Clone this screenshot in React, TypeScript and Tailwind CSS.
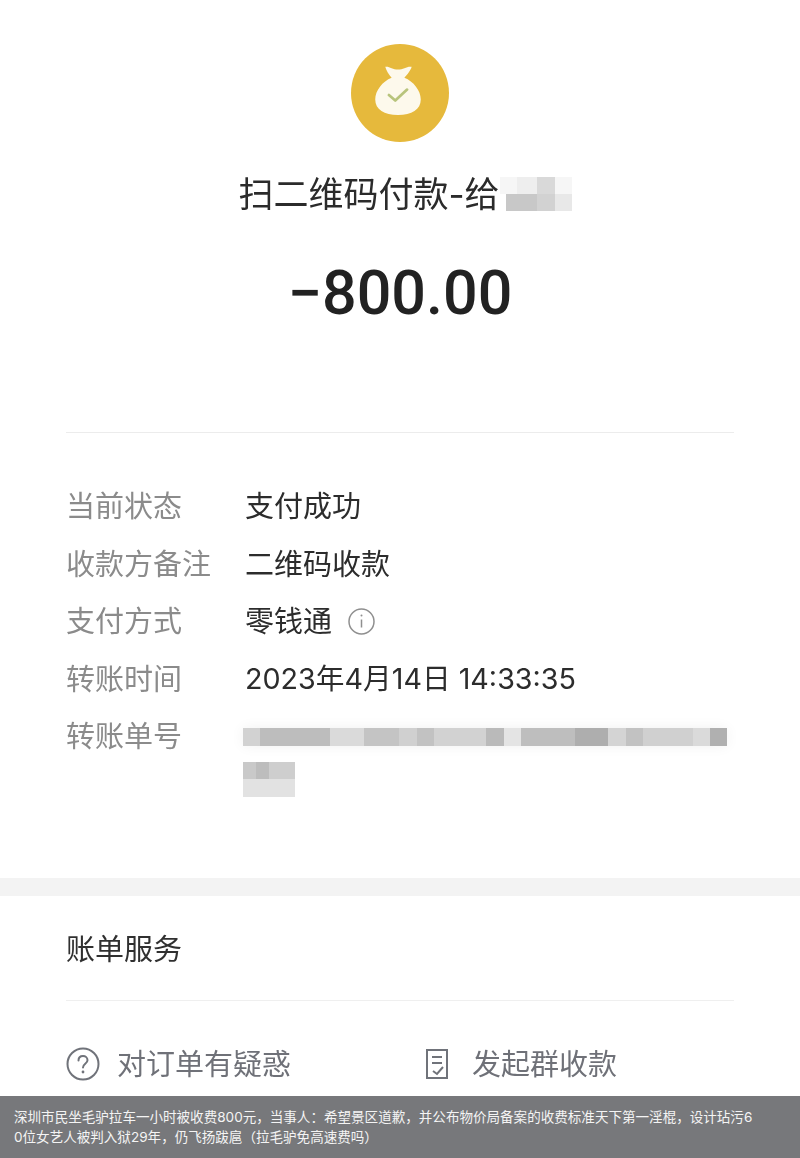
import type { ReactNode } from 'react';

const font = "font-['Inter','Noto_Sans_CJK_SC',sans-serif]";

const mosaicRow = [
  { w: 'w-[17px]', bg: 'bg-[#d2d2d2]' },
  { w: 'w-[70px]', bg: 'bg-[#bdbdbd]' },
  { w: 'w-[34px]', bg: 'bg-[#dadada]' },
  { w: 'w-[35px]', bg: 'bg-[#c4c4c4]' },
  { w: 'w-[18px]', bg: 'bg-[#d0d0d0]' },
  { w: 'w-[17px]', bg: 'bg-[#c2c2c2]' },
  { w: 'w-[52px]', bg: 'bg-[#d2d2d2]' },
  { w: 'w-[18px]', bg: 'bg-[#bababa]' },
  { w: 'w-[17px]', bg: 'bg-[#e4e4e4]' },
  { w: 'w-[54px]', bg: 'bg-[#bebebe]' },
  { w: 'w-[33px]', bg: 'bg-[#aeaeae]' },
  { w: 'w-[18px]', bg: 'bg-[#d4d4d4]' },
  { w: 'w-[17px]', bg: 'bg-[#c2c2c2]' },
  { w: 'w-[50px]', bg: 'bg-[#d0d0d0]' },
  { w: 'w-[17px]', bg: 'bg-[#dadada]' },
  { w: 'w-[17px]', bg: 'bg-[#b0b0b0]' },
];

function Row({ label, children }: { label: string; children: ReactNode }) {
  return (
    <div className="flex h-[57.5px] items-center">
      <div className="w-[179px] shrink-0 text-[29px] leading-none text-[#8b8b8b]">{label}</div>
      <div className="flex items-center text-[29px] leading-none text-[#2c2c2c]">{children}</div>
    </div>
  );
}

function MoneyBag() {
  return (
    <div className="flex h-[98px] w-[98px] items-center justify-center rounded-full bg-[#e6b93c] pr-[4px] pb-[5px]">
      <svg width="46" height="51" viewBox="0 0 50 56" fill="none">
        <path
          d="M11 2c4-1 8 3 14 3s10-4 15-3c-1 4-5 9-8 12 10 4 18 14 18 24 0 11-10 17-25 17S0 49 0 38c0-10 8-20 18-24-3-3-6-8-7-12z"
          fill="#fdf9ec"
        />
        <path d="M15 33l7 6 13-12" stroke="#b8c47c" strokeWidth="3" strokeLinecap="round" strokeLinejoin="round" />
      </svg>
    </div>
  );
}

export default function App() {
  return (
    <div className={`relative h-[1158px] w-[800px] overflow-hidden bg-white ${font}`}>
      <div className="blur-[0.5px]">
        <div className="flex h-[878px] flex-col px-[66px]">
          <div className="flex flex-col items-center pt-[44px]">
            <MoneyBag />
            <div className="mt-[33px] flex h-[38px] items-center pl-[10px]">
              <span className="text-[35px] leading-none text-[#2b2b2b]">扫二维码付款-给</span>
              <div className="flex flex-col">
                <div className="flex">
                  <div className="h-[17px] w-[17px] bg-[#f6f6f6]" />
                  <div className="h-[17px] w-[20px] bg-[#eeeeee]" />
                  <div className="h-[17px] w-[18px] bg-[#d9d9d9]" />
                  <div className="h-[17px] w-[17px] bg-[#f6f6f6]" />
                </div>
                <div className="flex">
                  <div className="h-[17px] w-[6px] bg-[#ffffff]" />
                  <div className="h-[17px] w-[31px] bg-[#c8c8c8]" />
                  <div className="h-[17px] w-[18px] bg-[#d2d2d2]" />
                  <div className="h-[17px] w-[17px] bg-[#e8e8e8]" />
                </div>
              </div>
            </div>
            <div className="mt-[44px] font-['Roboto','Noto_Sans_CJK_SC',sans-serif] text-[61px] font-medium leading-[72px] text-[#222222]">
              −800.00
            </div>
          </div>
          <div className="mt-[103px] h-px bg-[#ececec]" />
          <div className="mt-[45px] flex flex-col">
            <Row label="当前状态">支付成功</Row>
            <Row label="收款方备注">二维码收款</Row>
            <Row label="支付方式">
              零钱通
              <svg className="ml-[15px]" width="29" height="29" viewBox="0 0 29 29" fill="none">
                <circle cx="14.5" cy="14.5" r="12.5" stroke="#8f8f8f" strokeWidth="1.5" />
                <path d="M14.5 12.5v8" stroke="#8f8f8f" strokeWidth="1.5" />
                <circle cx="14.5" cy="8.5" r="1" fill="#8f8f8f" />
              </svg>
            </Row>
            <Row label="转账时间">
              <span className="text-[28.7px]">2023年4月14日 14:33:35</span>
            </Row>
            <Row label="转账单号">
              <div className="-ml-[2px] flex h-[18px] shadow-[0_0_14px_#f1f1f1]">
                {mosaicRow.map((cell, i) => (
                  <div key={i} className={`h-full ${cell.w} ${cell.bg}`} />
                ))}
              </div>
            </Row>
            <div className="ml-[177px] -mt-[4px] w-[52px]">
              <div className="flex">
                <div className="h-[17px] w-[13px] bg-[#c9c9c9]" />
                <div className="h-[17px] w-[13px] bg-[#bdbdbd]" />
                <div className="h-[17px] w-[26px] bg-[#cecece]" />
              </div>
              <div className="h-[18px] bg-[#e2e2e2]" />
            </div>
          </div>
        </div>
        <div className="h-[18px] bg-[#f3f3f3]" />
        <div className="px-[66px]">
          <div className="flex h-[105px] items-center border-b border-[#efefef] pt-[3px] text-[29px] leading-none text-[#303030]">
            账单服务
          </div>
          <div className="mt-[46px] flex items-center text-[29px] leading-none text-[#6f7178]">
            <div className="flex w-[359px] items-center">
              <svg width="34" height="34" viewBox="0 0 34 34" fill="none">
                <circle cx="17" cy="17" r="15.5" stroke="#70737a" strokeWidth="2" />
                <path
                  d="M12.5 13.5c0-3 2-4.5 4.5-4.5s4.5 1.7 4.5 4.2c0 3.6-4.5 3.6-4.5 7.3"
                  stroke="#70737a"
                  strokeWidth="2"
                  strokeLinecap="round"
                />
                <circle cx="17" cy="25" r="1.4" fill="#70737a" />
              </svg>
              <span className="ml-[17px]">对订单有疑惑</span>
            </div>
            <svg width="26" height="32" viewBox="0 0 26 32" fill="none">
              <path d="M2 2h20v28H2z" stroke="#70737a" strokeWidth="2" />
              <path d="M7 9h10M7 15h10M8 23l4 3 6-7" stroke="#70737a" strokeWidth="2" />
            </svg>
            <span className="ml-[21px]">发起群收款</span>
          </div>
        </div>
      </div>
      <div className="absolute inset-x-0 bottom-0 h-[62px] bg-[#77787b] px-[14px] pt-[11px] text-[13.55px] leading-[20px] break-all text-[#f4f4f4]">
        <div className="w-[742px]">
          深圳市民坐毛驴拉车一小时被收费800元，当事人：希望景区道歉，并公布物价局备案的收费标准天下第一淫棍，设计玷污60位女艺人被判入狱29年，仍飞扬跋扈（拉毛驴免高速费吗）
        </div>
      </div>
    </div>
  );
}
